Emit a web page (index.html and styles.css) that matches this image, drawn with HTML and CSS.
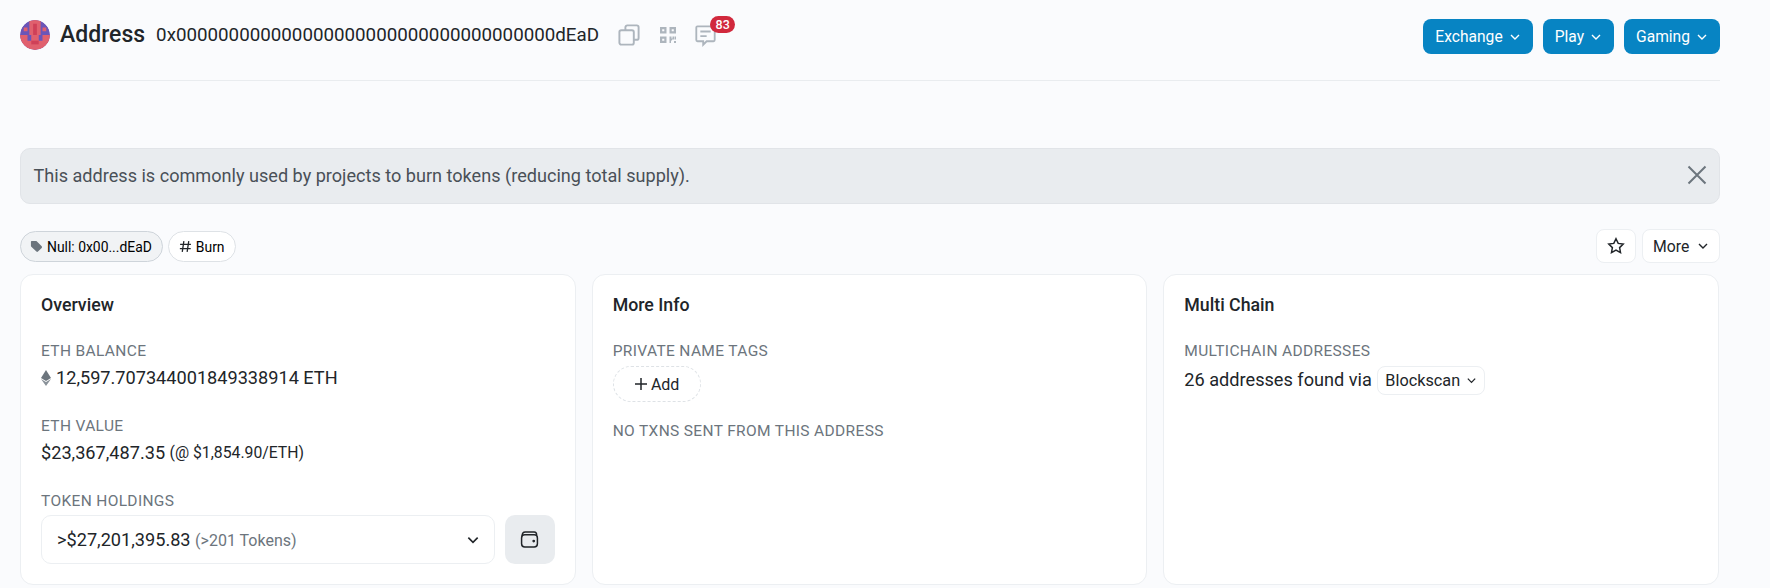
FILE: index.html
```html
<!DOCTYPE html>
<html lang="en">
<head>
<meta charset="utf-8">
<title>Address 0x000000000000000000000000000000000000dEaD</title>
<link rel="stylesheet" href="styles.css">
</head>
<body>
<main class="page">
  <header class="top">
    <div class="title">
      <svg class="avatar" viewBox="0 0 8 8" width="30" height="30">
        <defs><clipPath id="c"><circle cx="4" cy="4" r="4"/></clipPath></defs>
        <g clip-path="url(#c)">
          <rect width="8" height="8" fill="#6a55b8"/>
          <path fill="#e0606e" d="M2.500 0h3v4H5v1.500h1V4h2v4H0V4h2v1.500h1V4h-.5zM1 2h1v1H1zM6 2h1v1H6z"/>
          <rect x="3.500" y="1" width="1" height="3" fill="#cf4058"/>
          <rect x="3" y="5.500" width="2" height="1" fill="#cf4058"/>
        </g>
      </svg>
      <h1 class="heading">Address</h1>
      <span class="hash">0x000000000000000000000000000000000000dEaD</span>
      <span class="tools">
        <svg class="tool copy" viewBox="0 0 20 20"><path d="M7 5.500V3.600C7 2.700 7.700 2 8.600 2h7.800c.9 0 1.600.7 1.600 1.600v8.800c0 .9-.7 1.600-1.600 1.600H14M3.600 6h8.800c.9 0 1.600.7 1.600 1.600v8.800c0 .9-.7 1.600-1.600 1.600H3.600C2.700 18 2 17.300 2 16.400V7.600C2 6.700 2.700 6 3.600 6z"/></svg>
        <svg class="tool qr" viewBox="0 0 18 18"><path d="M1 1h6.500v6.500H1zM3.200 3.200v2.100h2.100V3.200zM10.500 1H17v6.500h-6.500zM12.700 3.200v2.100h2.100V3.200zM1 10.500h6.500V17H1zM3.200 12.700v2.100h2.100v-2.100zM10.500 10.500h2v2h1v-2h1.500v3h-2v1h-1v2.500h-1.500zM15 15h2v2h-2zM15.500 10.500H17v3h-1.500z" fill-rule="evenodd"/></svg>
        <span class="chat">
          <svg class="tool comment" viewBox="0 0 20 20"><path d="M3 2h14c.6 0 1 .4 1 1v11c0 .6-.4 1-1 1h-6l-3 3v-3H3c-.6 0-1-.4-1-1V3c0-.6.4-1 1-1zM5.500 6.500h9M5.500 10.500h5.500"/></svg>
          <span class="badge">83</span>
        </span>
      </span>
    </div>
    <nav class="actions">
      <button class="cta">Exchange<svg class="chev" viewBox="0 0 12 12" width="12" height="12"><path d="M2 4l4 4 4-4"/></svg></button>
      <button class="cta">Play<svg class="chev" viewBox="0 0 12 12" width="12" height="12"><path d="M2 4l4 4 4-4"/></svg></button>
      <button class="cta">Gaming<svg class="chev" viewBox="0 0 12 12" width="12" height="12"><path d="M2 4l4 4 4-4"/></svg></button>
    </nav>
  </header>

  <div class="alert">
    <span>This address is commonly used by projects to burn tokens (reducing total supply).</span>
    <svg class="close" viewBox="0 0 20 20" width="20" height="20"><path d="M1.500 1.500l17 17M18.500 1.500l-17 17"/></svg>
  </div>

  <div class="tagrow">
    <div class="tags">
      <span class="tag tag-grey">
        <svg viewBox="0 0 14 14" width="13" height="13"><path fill="#6c757d" d="M1 1.800C1 1.300 1.300 1 1.800 1h4.400c.4 0 .7.100 1 .4l5.400 5.400c.5.500.5 1.200 0 1.700l-4 4c-.5.500-1.200.5-1.700 0L1.400 7.200C1.100 6.900 1 6.600 1 6.200z"/></svg>
        Null: 0x00...dEaD
      </span>
      <span class="tag">
        <svg class="hashicon" viewBox="0 0 12 12" width="13" height="13"><path d="M4.500 1L3 11M9 1L7.500 11M1 4h10M.8 8h10"/></svg>
        Burn
      </span>
    </div>
    <div class="tagtools">
      <button class="plain star"><svg viewBox="0 0 18 18" width="18" height="18"><path d="M9 1.800l2.200 4.600 5 .7-3.600 3.500.9 5L9 13.200l-4.500 2.400.9-5L1.800 7.100l5-.7z"/></svg></button>
      <button class="plain more">More<svg class="chev" viewBox="0 0 12 12" width="12" height="12"><path d="M2 4l4 4 4-4"/></svg></button>
    </div>
  </div>

  <section class="cards">
    <article class="card">
      <h2 class="card-title">Overview</h2>
      <div class="field">
        <h3 class="label">ETH BALANCE</h3>
        <div class="value"><svg class="eth" viewBox="0 0 10 16" width="10" height="16"><path fill="#6c757d" d="M5 0l5 8-5 3-5-3z"/><path fill="#8a9299" d="M5 12l5-3-5 7-5-7z"/></svg>12,597.707344001849338914 ETH</div>
      </div>
      <div class="field">
        <h3 class="label">ETH VALUE</h3>
        <div class="value">$23,367,487.35 <span class="rate">(@ $1,854.90/ETH)</span></div>
      </div>
      <div class="field last">
        <h3 class="label">TOKEN HOLDINGS</h3>
        <div class="holdings">
          <div class="select"><span>&gt;$27,201,395.83 <span class="muted">(&gt;201 Tokens)</span></span><svg class="chev dark" viewBox="0 0 12 12" width="14" height="14"><path d="M2 4l4 4 4-4"/></svg></div>
          <button class="wallet"><svg viewBox="0 0 18 18" width="19" height="19"><rect x="1.500" y="4.500" width="15" height="11.500" rx="3"/><path d="M2 6C2 3.500 3 2 5 2h8.500C15 2 15.800 3 15.800 5"/><circle cx="13" cy="10.500" r=".6"/></svg></button>
        </div>
      </div>
    </article>

    <article class="card">
      <h2 class="card-title">More Info</h2>
      <div class="field tight">
        <h3 class="label">PRIVATE NAME TAGS</h3>
        <button class="add"><svg viewBox="0 0 14 14" width="14" height="14"><path d="M7 1v12M1 7h12"/></svg>Add</button>
      </div>
      <h3 class="label">NO TXNS SENT FROM THIS ADDRESS</h3>
    </article>

    <article class="card">
      <h2 class="card-title">Multi Chain</h2>
      <div class="field">
        <h3 class="label">MULTICHAIN ADDRESSES</h3>
        <div class="value multi">26 addresses found via <button class="plain scan">Blockscan<svg class="chev" viewBox="0 0 12 12" width="11" height="11"><path d="M2 4l4 4 4-4"/></svg></button></div>
      </div>
    </article>
  </section>
</main>
</body>
</html>
```
FILE: styles.css
```css
* { box-sizing: border-box; }
html, body { margin: 0; height: 100%; }
body { background: #fafbfd; font-family: Roboto, "Liberation Sans", sans-serif; color: #212529; overflow: hidden; }
.page { width: 1770px; padding: 0 50px 0 20px; }
.top { display: flex; justify-content: space-between; align-items: flex-start; height: 81px; padding-top: 19px; border-bottom: 1px solid #e9ecef; }
.title { display: flex; align-items: center; height: 32px; }
.avatar { margin-right: 10px; border-radius: 50%; }
.heading { font-size: 23px; font-weight: 500; margin: 0 11px 0 0; line-height: 32px; color: #212529; }
.hash { font-size: 18.75px; line-height: 32px; }
.tools { display: flex; align-items: center; margin-left: 18px; }
.tool { fill: none; stroke: #adb5bd; stroke-width: 1.6; display: block; }
.copy { width: 24px; height: 24px; }
.qr { fill: #adb5bd; stroke: none; width: 18px; height: 18px; margin-left: 18px; }
.comment { width: 23px; height: 23px; }
.chat { position: relative; display: block; margin-left: 17px; }
.badge { position: absolute; left: 16px; top: -8px; background: #d1293d; color: #fff; font-size: 12.5px; font-weight: 500; line-height: 17px; height: 17px; padding: 0 5.5px; border-radius: 9px; }
.actions { display: flex; gap: 10px; }
.cta { display: flex; align-items: center; gap: 6px; height: 35px; padding: 0 12px; background: #0784c3; color: #fff; border: 0; border-radius: 8px; font: 400 15.6px Roboto, sans-serif; }
.chev { fill: none; stroke: currentColor; stroke-width: 1.4; }
.alert { display: flex; justify-content: space-between; align-items: center; margin-top: 67px; height: 56px; padding: 0 12px 2px 12.5px; background: #e9ecef; border: 1px solid #e1e4e8; border-radius: 10px; color: #495057; font-size: 18.1px; }
.close { fill: none; stroke: #6c757d; stroke-width: 2; }
.tagrow { display: flex; justify-content: space-between; align-items: flex-start; margin-top: 25px; height: 45px; }
.tags { display: flex; gap: 5px; margin-top: 2px; }
.tag { display: flex; align-items: center; gap: 4px; height: 31px; padding: 0 10px; border: 1px solid #dee2e6; border-radius: 16px; background: #fff; color: #000; font-size: 13.9px; }
.tag-grey { background: #f1f3f5; border-color: #ced4da; padding-left: 8.5px; gap: 4.5px; }
.hashicon { fill: none; stroke: #212529; stroke-width: 1.2; }
.tagtools { display: flex; gap: 6px; }
.plain { display: flex; align-items: center; gap: 8px; height: 34px; background: #fff; border: 1px solid #eceff2; border-radius: 8px; color: #212529; font: 400 15.75px Roboto, sans-serif; }
.star { width: 40px; justify-content: center; padding: 0; }
.star svg { fill: none; stroke: #212529; stroke-width: 1.5; }
.more { padding: 0 9px 0 10px; width: 78px; }
.cards { display: flex; gap: 16px; }
.card { width: 555.67px; height: 311px; padding: 19px 20px; background: #fff; border: 1px solid #eceff2; border-radius: 13px; }
.card-title { margin: 0 0 25px; font-size: 17.75px; font-weight: 500; line-height: 22px; }
.label { margin: 0 0 5px; font-size: 15.5px; font-weight: 400; line-height: 20px; color: #6c757d; letter-spacing: .35px; }
.field { margin-bottom: 26px; }
.field.tight { margin-bottom: 19px; }
.field.last { margin-bottom: 0; }
.value { display: flex; align-items: center; font-size: 18.15px; line-height: 24px; white-space: pre; }
.eth { margin-right: 5px; }
.rate { font-size: 15.75px; }
.holdings { display: flex; gap: 10px; margin-top: -1px; }
.select { flex: 1; display: flex; justify-content: space-between; align-items: center; height: 49px; padding: 0 14px 0 15px; background: #fff; border: 1px solid #eceff2; border-radius: 10px; font-size: 18.15px; }
.muted { color: #6c757d; font-size: 16px; }
.chev.dark { color: #212529; }
.wallet { width: 50px; height: 49px; display: flex; align-items: center; justify-content: center; border: 0; border-radius: 10px; background: #e9ecef; padding: 0; }
.wallet svg { fill: none; stroke: #212529; stroke-width: 1.4; }
.add { display: flex; align-items: center; gap: 3px; height: 36px; width: 88px; justify-content: center; background: #fff; border: 1px dashed #dee2e6; border-radius: 18px; color: #212529; font: 400 16px Roboto, sans-serif; padding: 0; }
.add svg { fill: none; stroke: #212529; stroke-width: 1.5; }
.multi { height: 28px; }
.scan { height: 29px; padding: 0 7px; gap: 6px; margin-left: 1px; font-size: 16.25px; }
```
